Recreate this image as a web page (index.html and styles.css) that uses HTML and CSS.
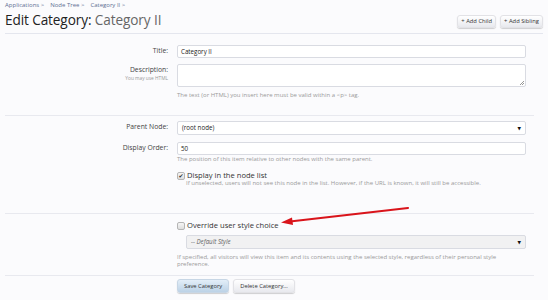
FILE: index.html
```html
<!DOCTYPE html>
<html>
<head>
<meta charset="utf-8">
<link rel="stylesheet" href="styles.css">
</head>
<body>
<div class="page">
  <div class="breadcrumb">
    <span>Applications &gt;</span><span>Node Tree &gt;</span><span>Category II &gt;</span>
  </div>
  <div class="titlebar">
    <h1>Edit Category: <span class="sub">Category II</span></h1>
    <div class="topctrls">
      <a class="btn">+ Add Child</a>
      <a class="btn">+ Add Sibling</a>
    </div>
  </div>

  <form class="form">
    <div class="section s1">
      <div class="row r-title">
        <label class="lbl">Title:</label>
        <div class="ctrl"><div class="input">Category II</div></div>
      </div>
      <div class="row r-desc">
        <label class="lbl">Description:<span class="lblhint">You may use HTML</span></label>
        <div class="ctrl">
          <div class="input textarea"><span class="grip"></span></div>
          <p class="hint">The text (or HTML) you insert here must be valid within a &lt;p&gt; tag.</p>
        </div>
      </div>
    </div>

    <div class="section s2">
      <div class="row r-parent">
        <label class="lbl">Parent Node:</label>
        <div class="ctrl"><div class="input select">(root node)<span class="caret">&#9660;</span></div></div>
      </div>
      <div class="row r-order">
        <label class="lbl">Display Order:</label>
        <div class="ctrl">
          <div class="input">50</div>
          <p class="hint">The position of this item relative to other nodes with the same parent.</p>
        </div>
      </div>
      <div class="row r-check">
        <div class="lbl"></div>
        <div class="ctrl">
          <div class="check"><span class="box checked">&#10004;</span>Display in the node list</div>
          <p class="hint indent">If unselected, users will not see this node in the list. However, if the URL is known, it will still be accessible.</p>
        </div>
      </div>
    </div>

    <div class="section s3">
      <div class="row r-style">
        <div class="lbl"></div>
        <div class="ctrl">
          <div class="check"><span class="box"></span>Override user style choice</div>
          <div class="input select disabled indent">-- Default Style<span class="caret">&#9660;</span></div>
          <p class="hint">If specified, all visitors will view this item and its contents using the selected style, regardless of their personal style preference.</p>
        </div>
      </div>
    </div>

    <div class="submit">
      <div class="lbl"></div>
      <div class="ctrl buttons">
        <a class="btn primary">Save Category</a>
        <a class="btn">Delete Category...</a>
      </div>
    </div>
  </form>

  <svg class="arrow" width="548" height="300" viewBox="0 0 548 300">
    <line x1="408" y1="208" x2="290" y2="221.5" stroke="#d9141b" stroke-width="2.2" stroke-linecap="round"/>
    <polygon points="281,222.5 292,217.5 293,225" fill="#d9141b"/>
  </svg>
</div>
</body>
</html>
```

FILE: styles.css
```css
* { box-sizing: border-box; }
html, body { margin: 0; padding: 0; }
body {
  background: #fbfbfd;
  font-family: "Open Sans", "DejaVu Sans", sans-serif;
  color: #333;
  width: 548px;
  height: 300px;
  overflow: hidden;
}
.page { padding: 0 5px; position: relative; }

.breadcrumb {
  padding-top: 1px;
  height: 10px;
  font-size: 6px;
  line-height: 9px;
  color: #5d6f93;
  display: flex;
  gap: 6px;
}

.titlebar {
  display: flex;
  justify-content: space-between;
  align-items: flex-start;
  height: 24px;
  border-bottom: 1px solid #e4e6ee;
}
h1 {
  margin: 0;
  font-family: "Open Sans", "DejaVu Sans", sans-serif;
  font-weight: normal;
  font-size: 13.6px;
  line-height: 20px;
  color: #222;
  letter-spacing: -0.1px;
}
h1 .sub { color: #666; }
.topctrls { display: flex; gap: 4px; padding-top: 5px; }

.btn {
  display: inline-block;
  font-size: 5.8px;
  line-height: 11px;
  height: 13px;
  padding: 0 3px;
  color: #333;
  border: 1px solid #e2e2e6;
  border-radius: 3px;
  background: linear-gradient(#ffffff, #e8e9ee);
  box-shadow: 0 1px 1px rgba(0,0,0,0.18);
  white-space: nowrap;
}

.form { width: 529px; }
.section { border-bottom: 1px solid #e8e9ef; }
.row, .submit {
  display: grid;
  grid-template-columns: 163px 349px;
  column-gap: 9px;
}
.lbl {
  text-align: right;
  font-size: 6.8px;
  line-height: 12px;
  color: #444;
}
.lblhint {
  display: block;
  font-size: 4.8px;
  line-height: 5px;
  color: #999;
}
.input {
  height: 13px;
  background: #fff;
  border: 1px solid #d9dbe2;
  border-radius: 2px;
  font-size: 6.2px;
  line-height: 11px;
  padding: 0 3px;
  color: #222;
  position: relative;
}
.textarea { height: 23px; }
.grip {
  position: absolute;
  right: 1px; bottom: 1px;
  width: 4px; height: 4px;
  background: linear-gradient(135deg, transparent 45%, #999 46%, #999 55%, transparent 56%, transparent 70%, #999 71%, #999 80%, transparent 81%);
}
.select { height: 14px; line-height: 12px; padding-left: 4px; }
.caret {
  position: absolute;
  right: 4px;
  top: 0;
  font-size: 4.5px;
  color: #111;
}
.disabled { background: #f1f1f2; color: #666; font-style: italic; }
.hint {
  margin: 0;
  font-size: 6px;
  line-height: 7px;
  color: #9a9a9a;
}
.indent { margin-left: 9px; }

.s1 { padding-top: 11px; padding-bottom: 16px; }
.r-title { margin-bottom: 6px; }
.r-desc .hint { margin-top: 5px; }

.s2 { padding-top: 5px; padding-bottom: 26px; }
.r-parent { margin-bottom: 7px; }
.r-order .hint { margin-top: 1px; }
.r-check { margin-top: 8px; }

.check {
  display: flex;
  align-items: center;
  font-size: 7.6px;
  line-height: 9px;
  color: #333;
}
.box {
  width: 8px; height: 8px;
  border: 1px solid #b5b5b5;
  border-radius: 2px;
  background: linear-gradient(#f6f6f6, #dedede);
  margin-right: 2px;
  font-size: 6px;
  line-height: 6px;
  text-align: center;
  color: #333;
}
.r-check .hint { margin-top: 0; }

.s3 { padding-top: 7px; padding-bottom: 7px; }
.r-style .input { margin-top: 5px; width: 340px; }
.r-style .hint { margin-top: 5px; width: 330px; }

.submit { padding-top: 3px; }
.buttons { display: flex; gap: 4px; }
.buttons .btn { height: 14px; line-height: 12px; padding: 0 6px; font-size: 5.8px; }
.btn.primary {
  background: linear-gradient(#e3eef8, #bcd2e6);
  border-color: #c7d6e5;
}

.arrow { position: absolute; left: 0; top: 0; pointer-events: none; }
```
